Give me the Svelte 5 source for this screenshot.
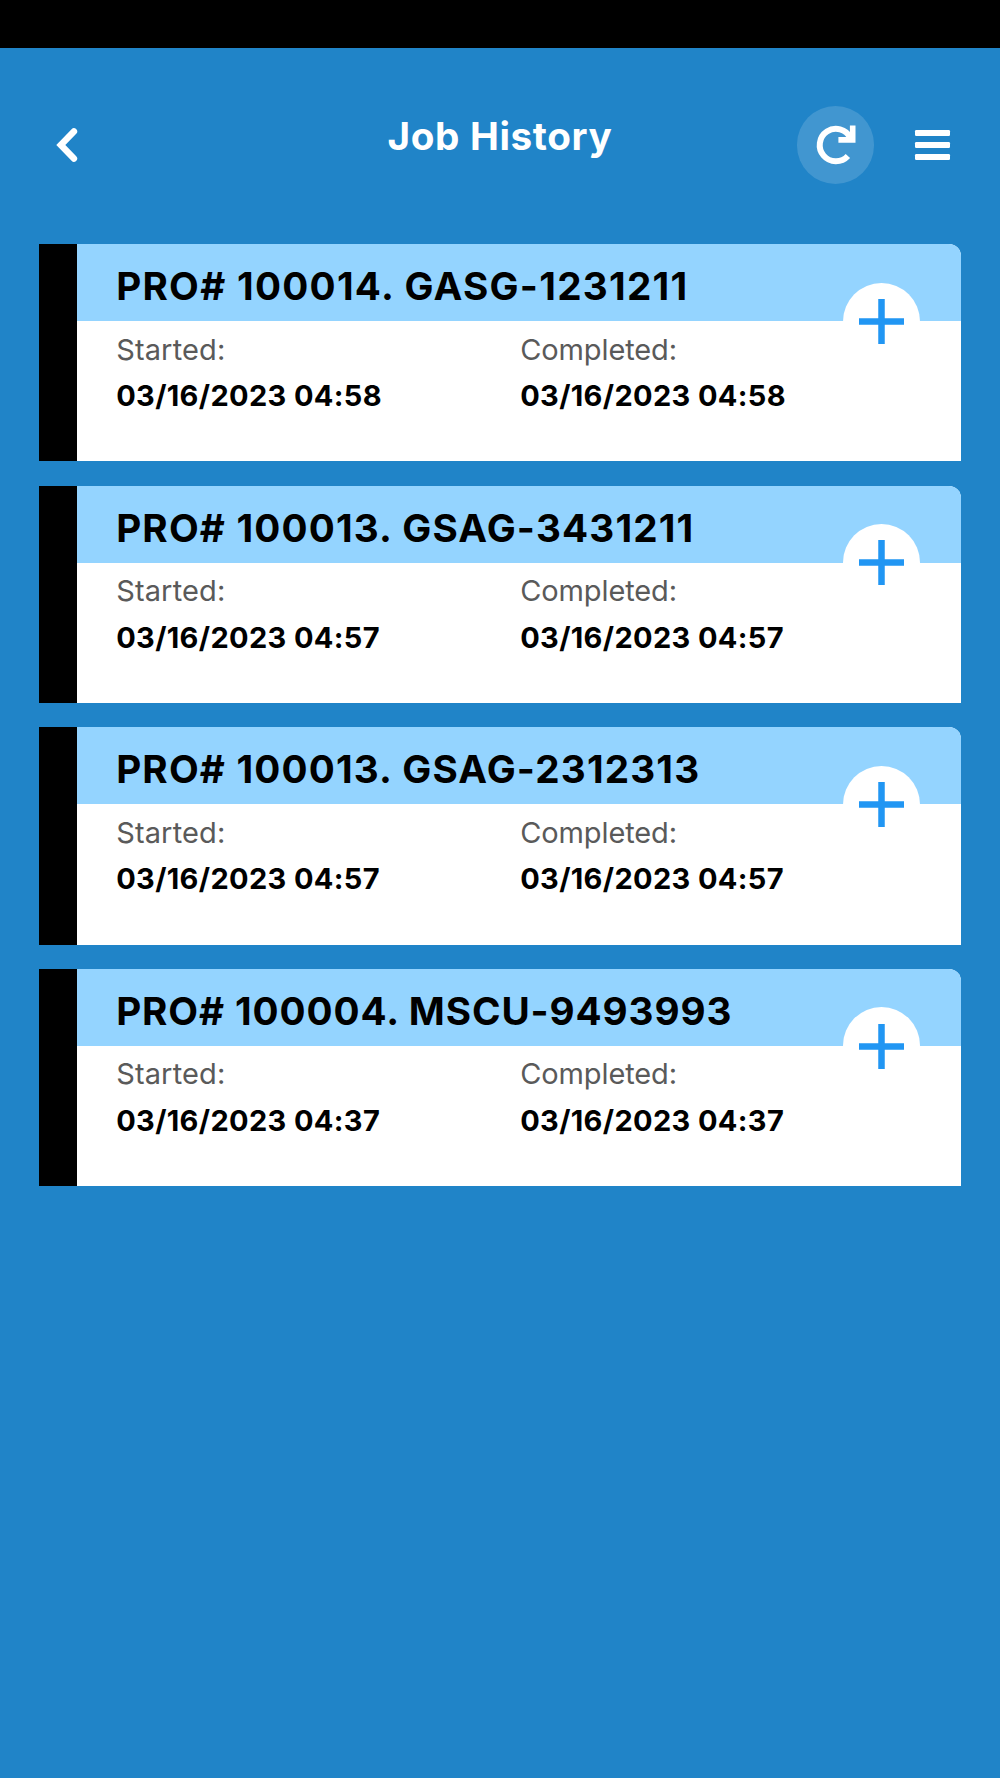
<script lang="ts">
    const jobs = [
        {
            title: "PRO# 100014. GASG-1231211",
            started: "03/16/2023 04:58",
            completed: "03/16/2023 04:58",
            tracking: 1.28,
        },
        {
            title: "PRO# 100013. GSAG-3431211",
            started: "03/16/2023 04:57",
            completed: "03/16/2023 04:57",
            tracking: 1.17,
        },
        {
            title: "PRO# 100013. GSAG-2312313",
            started: "03/16/2023 04:57",
            completed: "03/16/2023 04:57",
            tracking: 1.17,
        },
        {
            title: "PRO# 100004. MSCU-9493993",
            started: "03/16/2023 04:37",
            completed: "03/16/2023 04:37",
            tracking: 0.9,
        },
    ];
</script>

<main>
    <div class="statusBar"></div>
    <header>
        <button class="back" aria-label="Back">
            <svg width="24" height="38" viewBox="0 0 24 38">
                <path d="M19.9 5.4L6.8 19l13.1 13.6" />
            </svg>
        </button>
        <h1>Job History</h1>
        <div class="actions">
            <button class="refresh" aria-label="Refresh">
                <svg width="44" height="44" viewBox="0 0 44 44">
                    <path d="M34.9 33A16.2 16.2 0 1 1 37.4 14.8" />
                    <path class="solid" d="M36.9 2.5h5.6v17.2H25.4v-5.7h7.2l4.3-2.2z" />
                </svg>
            </button>
            <button class="menu" aria-label="Menu">
                <span></span>
                <span></span>
                <span></span>
            </button>
        </div>
    </header>

    <div class="jobs">
        {#each jobs as job}
            <article>
                <div class="cardHeader">
                    <h2 style="letter-spacing: {job.tracking}px">{job.title}</h2>
                </div>
                <dl>
                    <div>
                        <dt>Started:</dt>
                        <dd>{job.started}</dd>
                    </div>
                    <div>
                        <dt class="completed">Completed:</dt>
                        <dd>{job.completed}</dd>
                    </div>
                </dl>
                <button class="expand" aria-label="Expand">
                    <svg width="45" height="45" viewBox="0 0 45 45">
                        <path d="M22.5 0v45M0 22.5h45" />
                    </svg>
                </button>
            </article>
        {/each}
    </div>
</main>

<style>
    :global(body) {
        margin: 0;
        background-color: #2084c8;
    }
    main {
        min-height: 1778px;
        background-color: #2084c8;
        font-family: Inter, "Liberation Sans", sans-serif;
    }
    button {
        padding: 0;
        border: none;
        background: none;
    }
    svg {
        display: block;
        fill: none;
        stroke: #fff;
    }
    .statusBar {
        height: 48.3px;
        background-color: #000;
    }
    header {
        display: grid;
        grid-template-columns: 1fr auto 1fr;
        align-items: center;
        height: 195.7px;
        box-sizing: border-box;
        padding: 0 50.5px 2.4px;
    }
    .back {
        justify-self: start;
        padding-left: 3.5px;
    }
    .back svg {
        stroke-width: 6.5;
        stroke-linecap: round;
    }
    h1 {
        margin: 0 0 17px;
        color: #fff;
        font-size: 38.65px;
        font-weight: 700;
        line-height: 46px;
        letter-spacing: 0.65px;
    }
    .actions {
        display: flex;
        justify-content: flex-end;
        align-items: center;
        gap: 41px;
    }
    .refresh {
        display: flex;
        align-items: center;
        justify-content: center;
        width: 77.3px;
        height: 77.3px;
        border-radius: 50%;
        background-color: rgba(255, 255, 255, 0.15);
    }
    .refresh svg {
        stroke-width: 6;
    }
    .refresh .solid {
        fill: #fff;
        stroke: none;
    }
    .menu {
        display: flex;
        flex-direction: column;
        gap: 6px;
    }
    .menu span {
        width: 34.5px;
        height: 6px;
        border-radius: 1.2px;
        background-color: #fff;
    }
    .jobs {
        display: flex;
        flex-direction: column;
        gap: 24.2px;
        padding: 0 38.65px;
    }
    article {
        position: relative;
        height: 217.4px;
        box-sizing: border-box;
        border-left: 38.65px solid #000;
        border-top-right-radius: 12px;
        background-color: #fff;
    }
    .cardHeader {
        display: flex;
        align-items: center;
        height: 77.3px;
        box-sizing: border-box;
        padding: 6.8px 0 0 39.5px;
        border-top-right-radius: 12px;
        background-color: #94d4ff;
    }
    h2 {
        margin: 0;
        color: #000;
        font-size: 38.65px;
        font-weight: 650;
        line-height: 46px;
        white-space: nowrap;
    }
    dl {
        display: grid;
        grid-template-columns: 404px 1fr;
        margin: 0;
        padding: 5.4px 0 0 39.5px;
        font-size: 29px;
        line-height: 45.7px;
    }
    dt {
        margin-bottom: 0.9px;
        color: #5a5a5a;
        letter-spacing: 0.15px;
    }
    .completed {
        letter-spacing: -0.1px;
    }
    dd {
        margin: 0;
        color: #000;
        font-weight: 650;
        letter-spacing: 0.36px;
    }
    .expand {
        position: absolute;
        top: 38.65px;
        right: 41.2px;
        display: flex;
        align-items: center;
        justify-content: center;
        width: 77.3px;
        height: 77.3px;
        border-radius: 50%;
        background-color: #fff;
    }
    .expand svg {
        stroke: #2196f3;
        stroke-width: 6.5;
    }
</style>
